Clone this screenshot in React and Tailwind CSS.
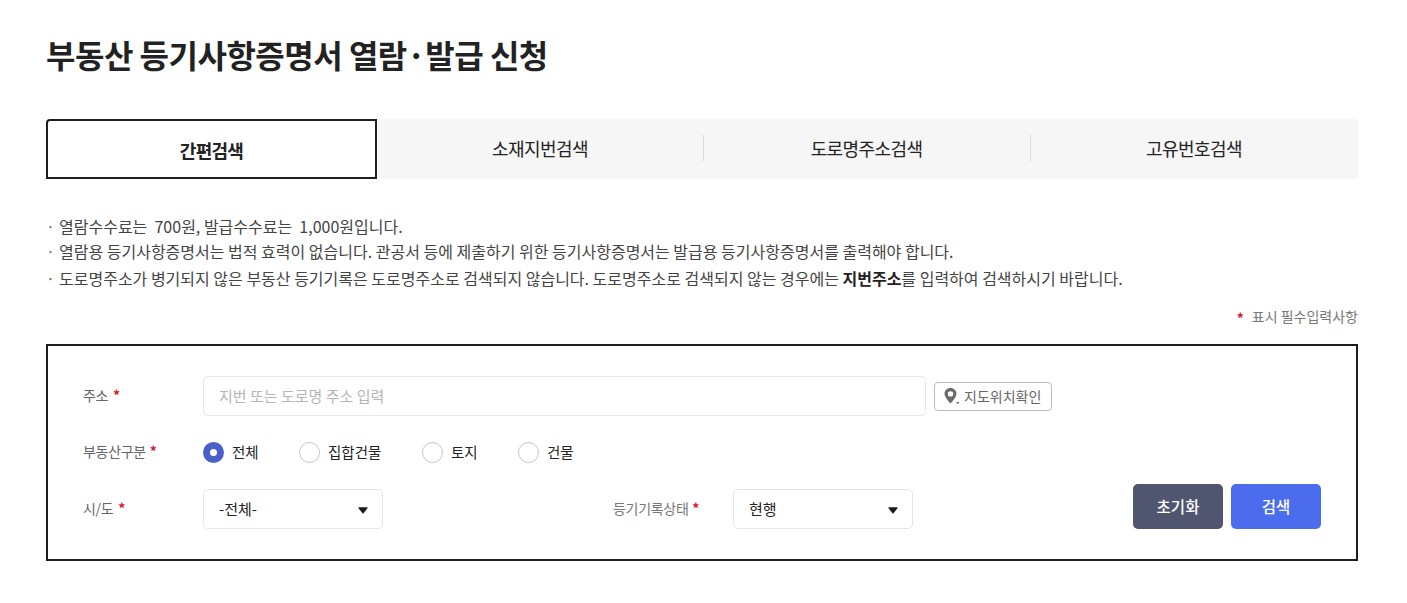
import React from 'react';

const tabs = [
  { label: '소재지번검색', width: 'w-[326px]' },
  { label: '도로명주소검색', width: 'w-[327px]' },
  { label: '고유번호검색', width: 'flex-1' },
];
const radios = [
  { label: '전체', checked: true, width: 96 },
  { label: '집합건물', width: 123 },
  { label: '토지', width: 96 },
  { label: '건물', width: 80 },
];
const font = "font-['Noto_Sans_CJK_KR','Noto_Sans',sans-serif]";

const Star = ({ className = '' }) => (
  <span className={`text-[#d8122f] text-[14px] font-bold leading-none ${className}`}>*</span>
);

const Caret = () => (
  <svg width="10" height="7" viewBox="0 0 10 7" className="absolute right-[14px] top-[17px]">
    <path d="M0.3 1 Q0.3 0.3 1.2 0.3 H8.8 Q9.7 0.3 9.7 1 L5.5 6.2 Q5 6.8 4.5 6.2 Z" fill="#1a1a1a" />
  </svg>
);

const Select = ({ value }) => (
  <div className="relative w-[180px] h-10 border border-[#e5e5e5] rounded-[5px] pl-[15px] flex items-center text-[15px] text-[#222]">
    {value}
    <Caret />
  </div>
);

const Radio = ({ label, checked, width }) => (
  <div className="flex items-center" style={{ width }}>
    {checked ? (
      <span className="w-[21px] h-[21px] rounded-full bg-[#4a5fc8] flex items-center justify-center">
        <span className="w-[7px] h-[7px] rounded-full bg-white" />
      </span>
    ) : (
      <span className="w-[21px] h-[21px] rounded-full border border-[#c4c4c4] bg-white" />
    )}
    <span className="ml-[8px] text-[14.5px] text-[#222]">{label}</span>
  </div>
);

const Dot = () => <span className="w-[13px] text-[#777]">·</span>;

export default function App() {
  return (
    <div className={`min-h-screen bg-white pl-[46px] pr-[49px] ${font}`}>
      <h1 className="pt-[32px] text-[32px] leading-[44px] font-bold tracking-[-0.5px] text-[#222]">
        부동산 등기사항증명서 열람·발급 신청
      </h1>

      {/* tabs */}
      <div className="mt-[43px] h-[60px] flex bg-[#f6f6f6] rounded-[4px]">
        <div className="w-[331px] border-2 border-[#1e1e1e] rounded-tl-[4px] bg-white flex items-center justify-center pt-[3px] text-[18px] font-bold tracking-[-0.7px] text-[#222]">
          간편검색
        </div>
        {tabs.map((t, i) => (
          <div key={t.label} className={`${t.width} flex items-center justify-center relative text-[18px] tracking-[-0.6px] text-[#222]`}>
            {i > 0 && <span className="absolute left-0 top-[16px] h-[26px] w-px bg-[#dcdcdc]" />}
            <span className="-mt-[1px]">{t.label}</span>
          </div>
        ))}
      </div>

      {/* notes */}
      <ul className="mt-[34px] text-[16px] text-[#444]">
        <li className="h-[26px] flex items-center">
          <Dot />
          <span className="whitespace-pre">열람수수료는  700원, 발급수수료는  1,000원입니다.</span>
        </li>
        <li className="h-[26px] -mt-[1px] flex items-center">
          <Dot />
          <span>열람용 등기사항증명서는 법적 효력이 없습니다. 관공서 등에 제출하기 위한 등기사항증명서는 발급용 등기사항증명서를 출력해야 합니다.</span>
        </li>
        <li className="h-[28px] flex items-center">
          <Dot />
          <span>
            도로명주소가 병기되지 않은 부동산 등기기록은 도로명주소로 검색되지 않습니다. 도로명주소로 검색되지 않는 경우에는{' '}
            <b className="text-[#222]">지번주소</b>를 입력하여 검색하시기 바랍니다.
          </span>
        </li>
      </ul>

      <div className="mt-[12px] h-[24px] flex items-center justify-end text-[14px] text-[#777]">
        <Star className="mr-[8px] mt-[3px]" />
        표시 필수입력사항
      </div>

      {/* form */}
      <div className="mt-[16px] h-[217px] border-2 border-[#1e1e1e] px-[35px] pt-[30px]">
        <div className="flex items-center h-10">
          <div className="w-[120px] text-[14px] tracking-[-0.3px] text-[#666] -mt-[2px]">
            주소 <Star className="ml-[2px]" />
          </div>
          <div className="w-[723px] h-10 border border-[#e5e5e5] rounded-[5px] pl-[15px] flex items-center text-[15px] text-[#b5b5b5]">
            지번 또는 도로명 주소 입력
          </div>
          <button className="ml-[8px] w-[118px] h-[29px] border border-[#bdbdbd] rounded-[4px] flex items-center pl-[9px] text-[14px] text-[#666]">
            <svg width="16" height="18" viewBox="0 0 16 18" className="shrink-0">
              <path fillRule="evenodd" d="M6.5 1C3 1 .5 3.6 .5 6.8 .5 10.6 6.5 16.5 6.5 16.5S12.5 10.6 12.5 6.8C12.5 3.6 10 1 6.5 1ZM6.5 4.2a2.7 2.7 0 1 1 0 5.4 2.7 2.7 0 0 1 0-5.4Z" fill="#6b6b6b" />
              <rect x="12.5" y="15" width="2.5" height="1.5" fill="#6b6b6b" />
            </svg>
            <span className="ml-[4px]">지도위치확인</span>
          </button>
        </div>

        <div className="flex items-center h-[26px] mt-[23px]">
          <div className="w-[120px] text-[14px] tracking-[-0.3px] text-[#666] -mt-[2px]">
            부동산구분 <Star className="ml-[1px]" />
          </div>
          {radios.map((r) => (
            <Radio key={r.label} {...r} />
          ))}
        </div>

        <div className="flex items-center h-10 mt-[24px]">
          <div className="w-[120px] text-[14px] tracking-[-0.3px] text-[#666] -mt-[2px]">
            시/도 <Star className="ml-[2px]" />
          </div>
          <Select value="-전체-" />
          <div className="ml-[230px] w-[120px] text-[14px] tracking-[-0.3px] text-[#777] -mt-[2px]">
            등기기록상태 <Star className="ml-[1px]" />
          </div>
          <Select value="현행" />
          <div className="ml-auto -mt-[5px] flex gap-2">
            <button className="w-[90px] h-[45px] rounded-[5px] bg-[#50566f] text-white text-[15.5px] font-medium">초기화</button>
            <button className="w-[90px] h-[45px] rounded-[5px] bg-[#4b6ded] text-white text-[15.5px] font-medium">검색</button>
          </div>
        </div>
      </div>
    </div>
  );
}
